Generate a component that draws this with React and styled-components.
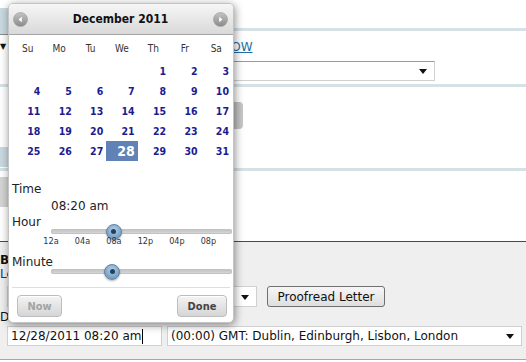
import React from 'react'
import styled, { createGlobalStyle } from 'styled-components'

const GlobalStyle = createGlobalStyle`
    html, body {
        margin: 0;
        padding: 0;
        background: #ffffff;
    }
    body {
        font-family: "DejaVu Sans", Verdana, sans-serif;
        font-size: 12px;
        color: #222222;
    }
    #root {
        position: relative;
        width: 526px;
        height: 362px;
        overflow: hidden;
    }
`

const Page = styled.div`
    position: relative;
    width: 526px;
    height: 362px;
`

/* ---------- page behind the picker ---------- */

const TopPanel = styled.div`
    height: 241px;
    display: flex;
    flex-direction: column;
`

const TabBar = styled.div`
    display: flex;
    align-items: flex-end;
    height: 36px;
    box-sizing: border-box;
    padding-top: 8px;
`

const Tab = styled.div`
    width: 150px;
    height: 26px;
    background: #c9d9e0;
    border-bottom: 1px solid #8c8c8c;
    margin-bottom: 1px;
`

const TabFill = styled.div`
    flex: 1;
    border-bottom: 3px solid #d6e1e6;
    margin-bottom: 5px;
`

const LinkRow = styled.div`
    display: grid;
    grid-template-columns: 202px auto;
    align-items: center;
    height: 22px;
`

const Caret = styled.span`
    font-size: 8px;
    color: #111;
    line-height: 1;
`

const PageLink = styled.a`
    color: #1c6ea8;
    text-decoration: underline;
    font-size: 12px;
    text-transform: uppercase;
`

const SelectRow = styled.div`
    height: 26px;
    box-sizing: border-box;
    padding: 3px 0 0 ${p => p.$left || 0}px;
`

const FakeSelect = styled.div`
    position: relative;
    width: ${p => p.$width}px;
    height: ${p => p.$height || 20}px;
    box-sizing: border-box;
    background: #ffffff;
    border: 1px solid #d0d0d0;
    border-top-color: ${p => (p.$dark ? '#9a9a9a' : '#d0d0d0')};
    padding: 0 20px 0 3px;
    display: flex;
    align-items: center;
    font-size: 12px;
    color: #111;
    white-space: nowrap;
    overflow: hidden;
    &::after {
        content: '';
        position: absolute;
        right: 7px;
        top: 50%;
        margin-top: -2px;
        border-left: 4px solid transparent;
        border-right: 4px solid transparent;
        border-top: 5px solid #111;
    }
`

const Stripe = styled.div`
    height: 3px;
    background: #d6e1e6;
    margin-top: ${p => p.$top || 0}px;
`

const GreyBar = styled.div`
    margin-top: ${p => p.$top}px;
    margin-left: ${p => p.$left || 0}px;
    width: ${p => p.$width}px;
    height: ${p => p.$height}px;
    border-radius: 0 4px 4px 0;
    background: linear-gradient(to right, #d4d4d4, #b4b4b4 85%, #c8c8c8);
`

const BlueBand = styled.div`
    margin-top: ${p => p.$top}px;
    width: 150px;
    height: ${p => p.$height}px;
    background: #c9d9e0;
`

const BottomPanel = styled.div`
    height: 119px;
    box-sizing: border-box;
    background: #efefef;
    border-top: 1px solid #4a4a4a;
    border-bottom: 1px solid #a8a8a8;
    padding-top: 11px;
    display: flex;
    flex-direction: column;
`

const FieldLabel = styled.div`
    line-height: 14px;
    height: 14px;
    font-size: 12px;
    font-weight: ${p => (p.$bold ? 700 : 400)};
    color: ${p => p.$color || '#111'};
    margin-top: ${p => p.$top || 0}px;
`

const FieldRow = styled.div`
    display: flex;
    align-items: center;
    gap: ${p => p.$gap}px;
    margin-top: ${p => p.$top}px;
    padding-left: 7px;
`

const ProofButton = styled.button`
    height: 21px;
    width: 118px;
    padding: 0;
    font-family: inherit;
    font-size: 12px;
    color: #111;
    border: 1px solid #707070;
    border-radius: 3px;
    background: linear-gradient(#f6f6f6, #dedede);
`

const TextInput = styled.div`
    width: 155px;
    height: 20px;
    box-sizing: border-box;
    background: #fff;
    border: 1px solid #d0d0d0;
    padding-left: 3px;
    display: flex;
    align-items: center;
    font-size: 12px;
    color: #111;
`

const TextCaret = styled.span`
    display: inline-block;
    width: 1px;
    height: 15px;
    background: #000;
    margin-left: 1px;
`

/* ---------- date-time picker ---------- */

const Picker = styled.div`
    position: absolute;
    left: 8px;
    top: 3px;
    width: 226px;
    box-sizing: border-box;
    background: #ffffff;
    border: 1px solid #c4c4c4;
    border-radius: 5px;
    box-shadow: 1px 2px 8px rgba(0, 0, 0, 0.45);
    overflow: hidden;
`

const PickerHeader = styled.div`
    height: 31px;
    box-sizing: border-box;
    display: flex;
    align-items: center;
    justify-content: space-between;
    padding: 0 5px 0 4px;
    background: linear-gradient(#f6f6f6, #d9d9d9);
    border-bottom: 1px solid #a4a4a4;
`

const Title = styled.div`
    font-family: "DejaVu Sans Condensed", "DejaVu Sans", sans-serif;
    font-weight: 700;
    font-size: 12px;
    color: #111;
`

const NavButton = styled.svg`
    display: block;
    width: 15px;
    height: 15px;
`

const Calendar = styled.table`
    border-collapse: collapse;
    margin: 0 3px;
    width: 220px;
    table-layout: fixed;
    font-family: "DejaVu Sans Condensed", "DejaVu Sans", sans-serif;
`

const DayName = styled.th`
    height: 26px;
    padding: 0;
    font-size: 10px;
    font-weight: 400;
    color: #333;
    text-align: center;
`

const DayCell = styled.td`
    height: 20px;
    padding: 0 3px 0 0;
    text-align: right;
    font-size: ${p => (p.$selected ? '14px' : '10.5px')};
    font-weight: 700;
    color: ${p => (p.$selected ? '#ffffff' : '#1c1c90')};
    background: ${p => (p.$selected ? '#6182b6' : 'transparent')};
`

const TimeBlock = styled.div`
    padding: 20px 1px 0 3px;
`

const SectionLabel = styled.div`
    line-height: 16px;
    font-size: 12px;
    color: #222;
`

const TimeValue = styled.div`
    margin: 1px 0 0 39px;
    line-height: 16px;
    font-size: 12px;
    color: #222;
`

const SliderRow = styled.div`
    display: grid;
    grid-template-columns: 39px 1fr;
    height: 20px;
    margin-top: ${p => p.$top || 0}px;
`

const SliderArea = styled.div`
    padding-top: 15px;
`

const Track = styled.div`
    position: relative;
    height: 5px;
    border-radius: 3px;
    background: linear-gradient(#bdbdbd, #dcdcdc);
    box-shadow: inset 0 0 0 1px #c2c2c2;
`

const Handle = styled.div`
    position: absolute;
    top: 50%;
    width: 16px;
    height: 16px;
    margin: -8px 0 0 -8px;
    box-sizing: border-box;
    border-radius: 50%;
    border: 1px solid #5b84a8;
    background: radial-gradient(circle at 50% 35%, #b5d0e6, #7fa6c8 60%, #6690b6);
    box-shadow: 0 1px 2px rgba(0, 0, 0, 0.3);
    &::after {
        content: '';
        position: absolute;
        left: 50%;
        top: 50%;
        width: 5px;
        height: 5px;
        margin: -2.5px 0 0 -2.5px;
        border-radius: 50%;
        background: #23415c;
    }
`

const Ticks = styled.div`
    position: relative;
    margin-left: 39px;
    height: 14px;
`

const Tick = styled.span`
    position: absolute;
    top: 0;
    transform: translateX(-50%);
    line-height: 14px;
    font-family: "DejaVu Sans Condensed", "DejaVu Sans", sans-serif;
    font-size: 9px;
    color: #333;
`

const Separator = styled.div`
    height: 1px;
    background: #dedede;
    margin: 13px 2px 0 0;
`

const ButtonBar = styled.div`
    display: flex;
    justify-content: space-between;
    padding: 7px 6px 5px 8px;
`

const PickerButton = styled.button`
    width: ${p => p.$width}px;
    height: 22px;
    padding: 0;
    font-family: "DejaVu Sans Condensed", "DejaVu Sans", sans-serif;
    font-size: 11px;
    font-weight: 700;
    color: ${p => (p.disabled ? '#a3a3a3' : '#444')};
    border: 1px solid #bdbdbd;
    border-radius: 4px;
    background: linear-gradient(#f4f4f4, #d5d5d5);
    box-shadow: inset 0 1px 0 #ffffff;
`

function Nav({ dir }) {
    const pts = dir === 'left' ? '8.8,4.8 8.8,10.2 5.6,7.5' : '6.2,4.8 6.2,10.2 9.4,7.5'
    return (
        <NavButton viewBox="0 0 15 15">
            <defs>
                <linearGradient id={`nav-${dir}`} x1="0" y1="0" x2="0" y2="1">
                    <stop offset="0" stopColor="#c4c4c4" />
                    <stop offset="1" stopColor="#8a8a8a" />
                </linearGradient>
            </defs>
            <circle cx="7.5" cy="7.5" r="7" fill={`url(#nav-${dir})`} stroke="#9a9a9a" strokeWidth="0.6" />
            <polygon points={pts} fill="#ffffff" />
        </NavButton>
    )
}

const dayNames = ['Su', 'Mo', 'Tu', 'We', 'Th', 'Fr', 'Sa']

function buildWeeks() {
    const weeks = []
    let week = [null, null, null, null]
    for (let d = 1; d <= 31; d++) {
        week.push(d)
        if (week.length === 7) {
            weeks.push(week)
            week = []
        }
    }
    if (week.length) weeks.push(week)
    return weeks
}

const weeks = buildWeeks()
const hourTicks = [['12a', 0], ['04a', 4], ['08a', 8], ['12p', 12], ['04p', 16], ['08p', 20]]

function Slider({ value, max }) {
    return (
        <SliderArea>
            <Track>
                <Handle style={{ left: `${(value / max) * 100}%` }} />
            </Track>
        </SliderArea>
    )
}

export default function App() {
    return (
        <Page>
            <GlobalStyle />
            <TopPanel>
                <TabBar>
                    <Tab />
                    <TabFill />
                </TabBar>
                <LinkRow>
                    <Caret>▼</Caret>
                    <PageLink>Follow</PageLink>
                </LinkRow>
                <SelectRow $left={100}>
                    <FakeSelect $width={335} $height={20} $dark />
                </SelectRow>
                <Stripe />
                <GreyBar $top={15} $left={100} $width={143} $height={27} />
                <BlueBand $top={18} $height={20} />
                <Stripe $top={1} />
                <GreyBar $top={6} $width={150} $height={30} />
            </TopPanel>

            <BottomPanel>
                <FieldLabel $bold>Body</FieldLabel>
                <FieldLabel $color="#2a2a70">Letter</FieldLabel>
                <FieldRow $top={5} $gap={10}>
                    <FakeSelect $width={250} $height={21}>Standard</FakeSelect>
                    <ProofButton>Proofread Letter</ProofButton>
                </FieldRow>
                <FieldLabel $top={3}>Date</FieldLabel>
                <FieldRow $top={2} $gap={5}>
                    <TextInput>
                        12/28/2011 08:20 am<TextCaret />
                    </TextInput>
                    <FakeSelect $width={355}>(00:00) GMT: Dublin, Edinburgh, Lisbon, London</FakeSelect>
                </FieldRow>
            </BottomPanel>

            <Picker>
                <PickerHeader>
                    <Nav dir="left" />
                    <Title>December 2011</Title>
                    <Nav dir="right" />
                </PickerHeader>
                <Calendar>
                    <thead>
                        <tr>
                            {dayNames.map(n => (
                                <DayName key={n}>{n}</DayName>
                            ))}
                        </tr>
                    </thead>
                    <tbody>
                        {weeks.map((w, i) => (
                            <tr key={i}>
                                {w.map((d, j) => (
                                    <DayCell key={j} $selected={d === 28}>
                                        {d}
                                    </DayCell>
                                ))}
                            </tr>
                        ))}
                    </tbody>
                </Calendar>
                <TimeBlock>
                    <SectionLabel>Time</SectionLabel>
                    <TimeValue>08:20 am</TimeValue>
                    <SliderRow>
                        <SectionLabel>Hour</SectionLabel>
                        <Slider value={8} max={23} />
                    </SliderRow>
                    <Ticks>
                        {hourTicks.map(([label, h]) => (
                            <Tick key={label} style={{ left: `${(h / 23) * 100}%` }}>
                                {label}
                            </Tick>
                        ))}
                    </Ticks>
                    <SliderRow $top={6}>
                        <SectionLabel>Minute</SectionLabel>
                        <Slider value={20} max={59} />
                    </SliderRow>
                    <Separator />
                </TimeBlock>
                <ButtonBar>
                    <PickerButton $width={45} disabled>Now</PickerButton>
                    <PickerButton $width={50}>Done</PickerButton>
                </ButtonBar>
            </Picker>
        </Page>
    )
}
